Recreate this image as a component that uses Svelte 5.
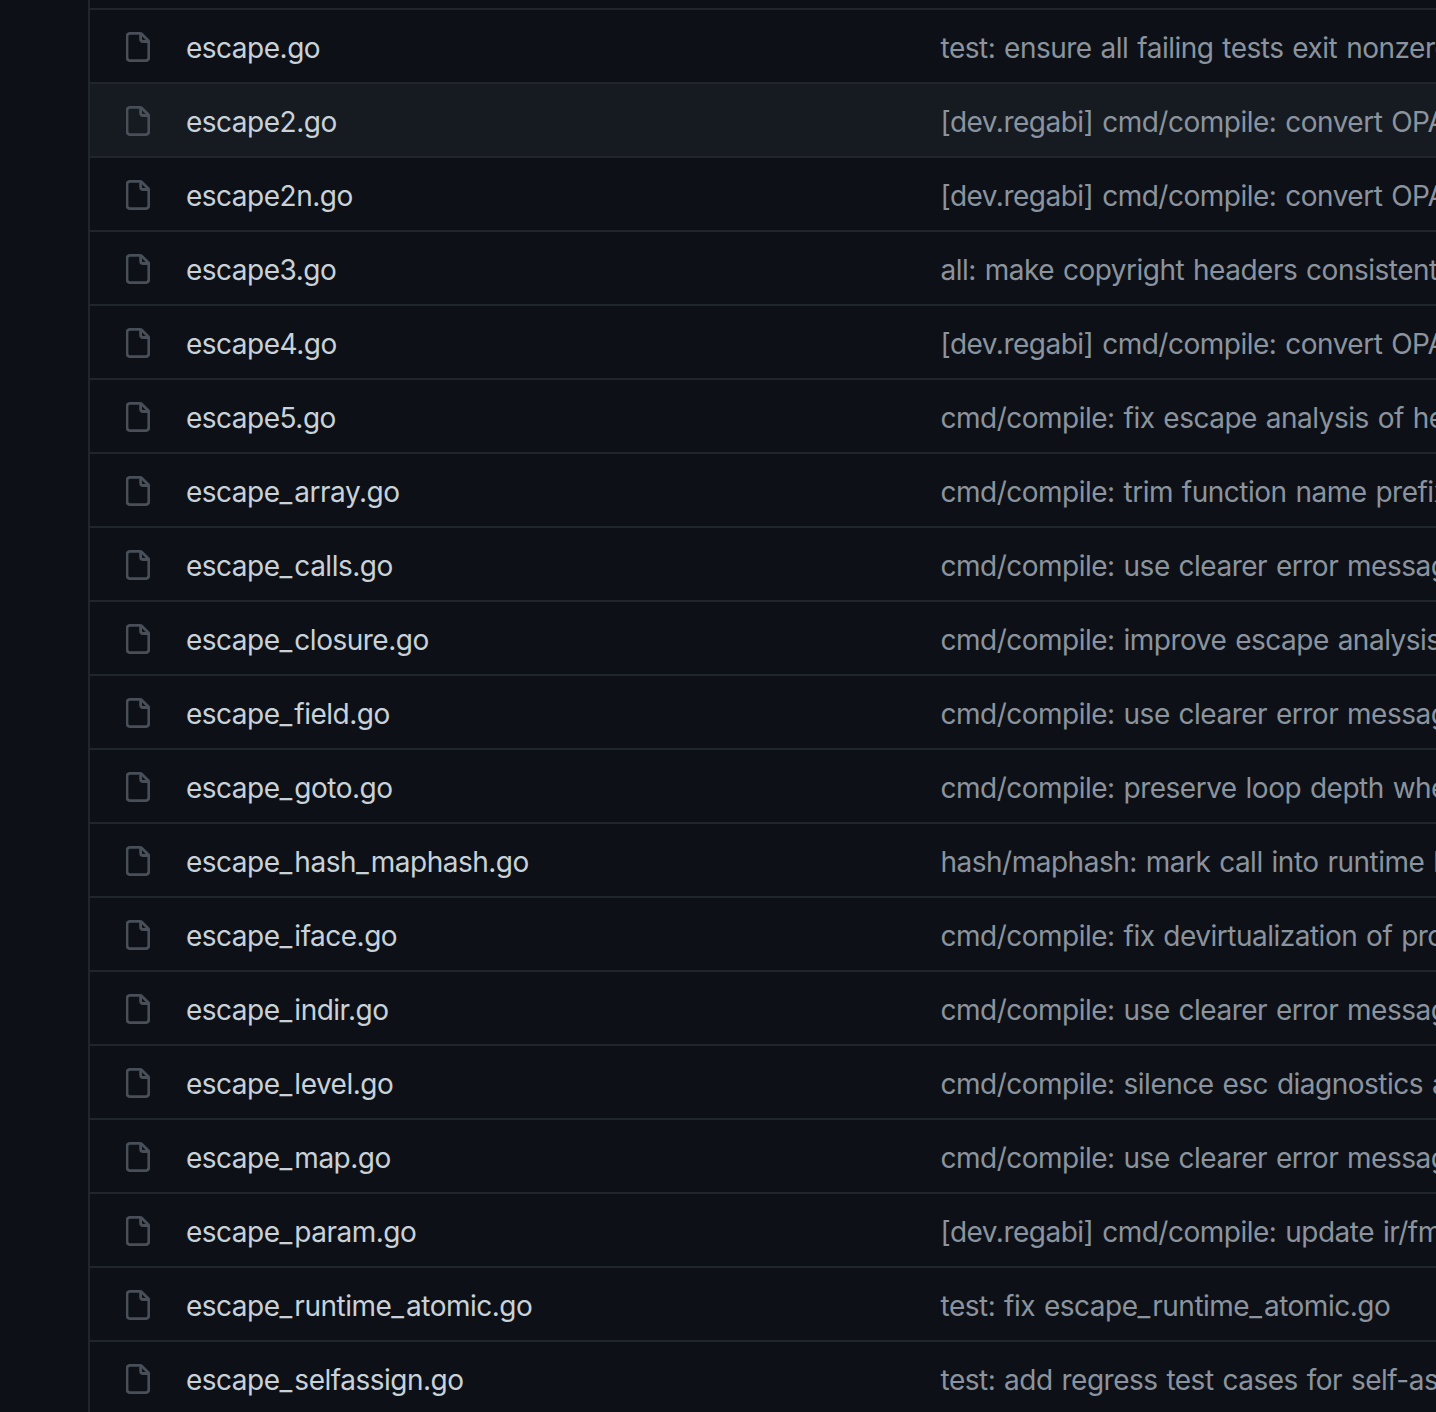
<script lang="ts">
	const files = [
		{ name: 'escape.go', message: 'test: ensure all failing tests exit nonzero' },
		{ name: 'escape2.go', message: '[dev.regabi] cmd/compile: convert OPANIC', hover: true },
		{ name: 'escape2n.go', message: '[dev.regabi] cmd/compile: convert OPANIC' },
		{ name: 'escape3.go', message: 'all: make copyright headers consistent' },
		{ name: 'escape4.go', message: '[dev.regabi] cmd/compile: convert OPANIC' },
		{ name: 'escape5.go', message: 'cmd/compile: fix escape analysis of heap' },
		{ name: 'escape_array.go', message: 'cmd/compile: trim function name prefix' },
		{ name: 'escape_calls.go', message: 'cmd/compile: use clearer error message' },
		{ name: 'escape_closure.go', message: 'cmd/compile: improve escape analysis' },
		{ name: 'escape_field.go', message: 'cmd/compile: use clearer error message' },
		{ name: 'escape_goto.go', message: 'cmd/compile: preserve loop depth when' },
		{ name: 'escape_hash_maphash.go', message: 'hash/maphash: mark call into runtime hash' },
		{ name: 'escape_iface.go', message: 'cmd/compile: fix devirtualization of promoted' },
		{ name: 'escape_indir.go', message: 'cmd/compile: use clearer error message' },
		{ name: 'escape_level.go', message: 'cmd/compile: silence esc diagnostics about' },
		{ name: 'escape_map.go', message: 'cmd/compile: use clearer error message' },
		{ name: 'escape_param.go', message: '[dev.regabi] cmd/compile: update ir/fmt' },
		{ name: 'escape_runtime_atomic.go', message: 'test: fix escape_runtime_atomic.go' },
		{ name: 'escape_selfassign.go', message: 'test: add regress test cases for self-assign' }
	];
</script>

{#snippet label(text: string)}
	{#each text.split('_') as part, i}{#if i > 0}<span class="us">_</span>{/if}{part}{/each}
{/snippet}

<div class="page">
	<div class="listing">
		<div class="top-edge"></div>
		{#each files as file}
			<div class="row" class:hover={file.hover}>
				<svg class="icon" viewBox="0 0 24 30" width="24" height="30" aria-hidden="true">
					<path d="M4 1.4h10.2c.6 0 1.1.2 1.5.6l6.5 6.5c.4.4.6.9.6 1.5V25.6a3 3 0 0 1-3 3H4a3 3 0 0 1-3-3V4.4a3 3 0 0 1 3-3Z" />
					<path d="M14.6 1.6V7a2.5 2.5 0 0 0 2.5 2.5H23" />
				</svg>
				<span class="name">{@render label(file.name)}</span>
				<span class="message">{@render label(file.message)}</span>
			</div>
		{/each}
	</div>
</div>

<style>
	:global(body) {
		margin: 0;
		background: #0d1117;
		overflow: hidden;
	}

	.page {
		height: 1412px;
		overflow: hidden;
		padding-left: 88px;
		font-family: Inter, 'Liberation Sans', sans-serif;
		font-size: 28px;
		letter-spacing: -0.5px;
	}

	.listing {
		border-left: 2px solid #21262d;
		min-height: 100%;
	}

	.top-edge {
		height: 8px;
		border-bottom: 2px solid #21262d;
	}

	.row {
		display: grid;
		grid-template-columns: 60px 754.5px 1fr;
		align-items: center;
		height: 72px;
		padding-left: 36px;
		border-bottom: 2px solid #21262d;
		white-space: nowrap;
	}

	.row.hover {
		background: #161b22;
	}

	.icon {
		margin-top: 2px;
		fill: none;
		stroke: #484f58;
		stroke-width: 2.8;
	}

	.name,
	.message {
		padding-top: 4px;
	}

	.us {
		letter-spacing: 2px;
	}

	.name {
		color: #c9d1d9;
	}

	.message {
		color: #8b949e;
		word-spacing: 1.5px;
	}
</style>
